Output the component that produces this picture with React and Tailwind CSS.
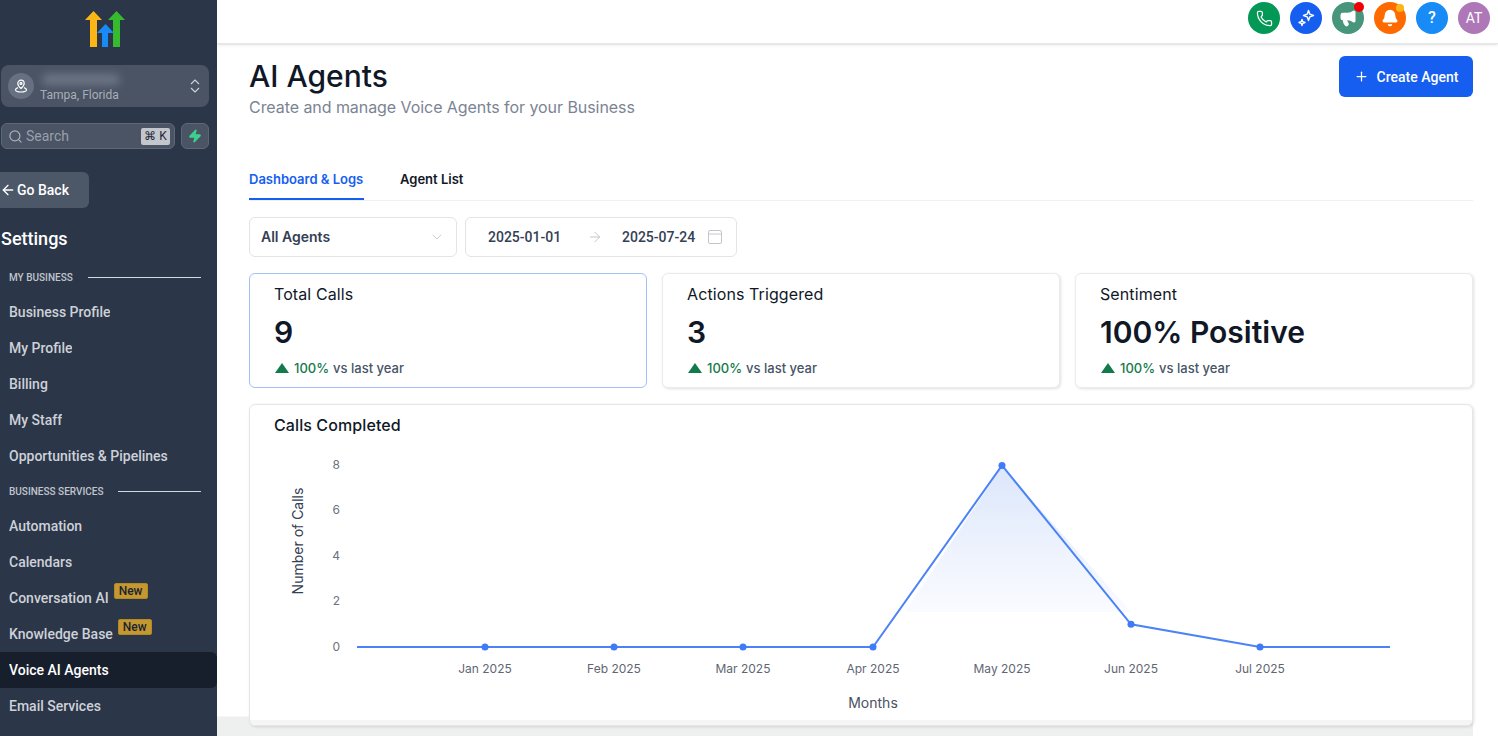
import { ArrowLeft, ArrowRight, ChevronDown, ChevronsUpDown, Megaphone, Phone, Plus, Search, Bell, Zap } from 'lucide-react'

function Logo() {
  return (
    <svg width="40" height="36" viewBox="0 0 40 36">
      <path d="M5 9H0L8.500 0L17 9H12V36H5Z" fill="#fbb516" />
      <path d="M28 9H23L31.500 0L40 9H35V36H28Z" fill="#36bb2e" />
      <path d="M17 22H12L20.500 13L29 22H23V36H17Z" fill="#188bf6" />
    </svg>
  )
}

function PinIcon() {
  return (
    <svg width="14" height="14" viewBox="0 0 14 14" fill="none" stroke="white" strokeWidth="1.200">
      <path d="M7 9.500C5.200 7.800 3.800 6.400 3.800 4.400A3.200 3.200 0 0 1 10.200 4.400C10.200 6.400 8.800 7.800 7 9.500Z" />
      <circle cx="7" cy="4.400" r="1" />
      <path d="M4 8.600C2.600 9.100 1.500 9.800 1.500 10.800C1.500 12.200 4 13 7 13S12.500 12.200 12.500 10.800C12.500 9.800 11.400 9.100 10 8.600" />
    </svg>
  )
}

function StarsIcon() {
  return (
    <svg width="18" height="18" viewBox="0 0 18 18" fill="none" stroke="white" strokeWidth="1.400" strokeLinejoin="round">
      <path d="M11.500 1.500L12.800 5.200L16.500 6.500L12.800 7.800L11.500 11.500L10.200 7.800L6.500 6.500L10.200 5.200Z" />
      <path d="M5 10.500L5.800 12.700L8 13.500L5.800 14.300L5 16.500L4.200 14.300L2 13.500L4.200 12.700Z" />
    </svg>
  )
}

function CalendarIcon() {
  return (
    <svg width="14" height="14" viewBox="0 0 14 14" fill="none" stroke="#c2c6cc" strokeWidth="1">
      <rect x="0.500" y="0.500" width="13" height="13" rx="1.500" />
      <path d="M0.500 4H13.500" />
    </svg>
  )
}

function NavItem({ label, badge, active }) {
  return (
    <div className={`relative flex h-9 items-center pl-[9px] text-sm font-medium ${active ? 'rounded-r-md bg-[#171e2c] text-white' : 'text-[#cdd1d8]'}`}>
      <span className="truncate">{label}</span>
      {badge && (
        <span className="mb-[15px] ml-[5px] rounded-[2px] border border-[#b08a26] bg-[#c4982f] px-1 text-xs leading-[14px] text-[#1b2333]">New</span>
      )}
    </div>
  )
}

function SectionLabel({ label, lineWidth }) {
  return (
    <div className="flex h-[16px] items-center justify-between pl-[9px] pr-4">
      <span className="text-[10px] font-medium text-[#c0c5cd]">{label}</span>
      <span className="h-px bg-[#d5d8dd]" style={{ width: lineWidth }} />
    </div>
  )
}

function Sidebar() {
  return (
    <aside className="flex h-full w-[217px] shrink-0 flex-col overflow-hidden bg-[#2b3648] font-['Roboto',sans-serif]">
      <div className="h-[65px] pl-[85px] pt-[11px]">
        <Logo />
      </div>
      <div className="mx-[1px] flex h-[42px] w-[208px] items-center rounded-lg bg-[#4a5464] pl-[7px] pr-[5px]">
        <div className="flex h-[26px] w-[26px] items-center justify-center rounded-full bg-[#667080]">
          <PinIcon />
        </div>
        <div className="ml-[6px] flex-1">
          <div className="mb-[3px] ml-[2px] mt-[3px] h-[11px] w-[78px] rounded-full bg-[#6d7686] blur-[4px]" />
          <div className="text-xs leading-[14px] text-[#a9afb9]">Tampa, Florida</div>
        </div>
        <ChevronsUpDown size={18} strokeWidth={1.5} className="text-[#cdd1d8]" />
      </div>
      <div className="mt-4 flex gap-[6px] pl-[1px]">
        <div className="flex h-[26px] w-[174px] items-center rounded-md border border-[#5e6775] bg-[#4a5464] pl-[6px] pr-[4px]">
          <Search size={15} className="text-[#a9afb9]" />
          <span className="mb-[1px] ml-[3px] flex-1 text-sm text-[#98a0ac]">Search</span>
          <span className="flex h-[17px] w-[29px] items-center justify-center rounded-[2px] bg-[#c3c7cd] text-xs text-[#1f2937]">⌘ K</span>
        </div>
        <div className="flex h-[26px] w-[28px] items-center justify-center rounded-md border border-[#5e6775] bg-[#4a5464]">
          <Zap size={14} className="fill-[#3ecf8e] text-[#3ecf8e]" />
        </div>
      </div>
      <div className="mt-[23px] flex h-9 w-[89px] items-center gap-[1px] rounded-r-md bg-[#4c5768] text-sm font-medium text-white">
        <ArrowLeft size={16} />
        <span>Go Back</span>
      </div>
      <div className="mt-[17px] pl-[1px] text-lg leading-7 font-medium text-white">Settings</div>
      <div className="mt-[16px]">
        <SectionLabel label="MY BUSINESS" lineWidth={113} />
      </div>
      <div className="mt-[9px]">
        <NavItem label="Business Profile" />
        <NavItem label="My Profile" />
        <NavItem label="Billing" />
        <NavItem label="My Staff" />
        <NavItem label="Opportunities & Pipelines" />
      </div>
      <div className="mt-[9px]">
        <SectionLabel label="BUSINESS SERVICES" lineWidth={83} />
      </div>
      <div className="mt-[9px]">
        <NavItem label="Automation" />
        <NavItem label="Calendars" />
        <NavItem label="Conversation AI" badge />
        <NavItem label="Knowledge Base" badge />
        <NavItem label="Voice AI Agents" active />
        <NavItem label="Email Services" />
      </div>
    </aside>
  )
}

function TopButton({ bg, children, dot }) {
  return (
    <div className={`relative flex h-8 w-8 items-center justify-center rounded-full text-white ${bg}`}>
      {children}
      {dot}
    </div>
  )
}

function TopBar() {
  return (
    <header className="relative flex h-[44px] shrink-0 items-start justify-end gap-[10px] border-b border-[#e5e7eb] pr-[8px] pt-[2px] font-['Roboto',sans-serif] shadow-sm">
      <TopButton bg="bg-[#039855]"><Phone size={17} strokeWidth={1.75} /></TopButton>
      <TopButton bg="bg-[#155eef]"><StarsIcon /></TopButton>
      <TopButton bg="bg-[#47967c]" dot={<span className="absolute top-0 right-0 h-[10px] w-[10px] rounded-full bg-[#f00000]" />}>
        <Megaphone size={18} className="fill-white" />
      </TopButton>
      <TopButton bg="bg-[#ff6a00]" dot={<span className="absolute top-[2px] right-[2px] h-2 w-2 rounded-full bg-[#fbb516]" />}>
        <Bell size={18} className="fill-white" />
      </TopButton>
      <TopButton bg="bg-[#188bf6]"><span className="text-base font-medium">?</span></TopButton>
      <TopButton bg="bg-[#ae78b8]"><span className="text-sm">AT</span></TopButton>
    </header>
  )
}

function StatCard({ title, value, active }) {
  return (
    <div className={`flex h-[115px] flex-1 flex-col rounded-md border bg-white pl-[24px] pt-[10px] ${active ? 'border-[#a3bff6]' : 'border-[#e9ebee] shadow-[1px_1px_3px_rgba(0,0,0,0.12)]'}`}>
      <div className="text-base leading-5 tracking-[0.1px] text-[#101828]">{title}</div>
      <div className="mt-[9px] text-3xl leading-[38px] font-semibold text-[#101828]">{value}</div>
      <div className="mt-[7px] flex items-center text-[13px] leading-5 font-medium text-[#475467]">
        <svg width="14" height="10" viewBox="0 0 14 10" className="ml-[1px] mr-[5px]"><path d="M7 0L14 10H0Z" fill="#137a4b" /></svg>
        <span className="text-[#137a4b]">100%</span>
        <span className="ml-1">vs last year</span>
      </div>
    </div>
  )
}

const months = [
  ['Jan 2025', 485, 0],
  ['Feb 2025', 614, 0],
  ['Mar 2025', 743, 0],
  ['Apr 2025', 873, 0],
  ['May 2025', 1002, 8],
  ['Jun 2025', 1131, 1],
  ['Jul 2025', 1260, 0],
]

// chart coordinates are page px minus the svg's corner
function Chart() {
  const y = (v) => 206 - v * 22.7
  const line = months.map(([, x, v]) => `${x - 250},${y(v)}`).join(' ')
  return (
    <svg width="1222" height="276" viewBox="0 0 1222 276" className="block" fontFamily="Inter, sans-serif">
      <defs>
        <linearGradient id="fill" x1="0" y1="0" x2="0" y2="1">
          <stop offset="0" stopColor="#dce7fb" />
          <stop offset="1" stopColor="#fafbff" />
        </linearGradient>
      </defs>
      <path d="M752 25L655 171H881Z" fill="url(#fill)" />
      <polyline points={`107,206 ${line} 1140,206`} fill="none" stroke="#4b83f7" strokeWidth="2" />
      {months.map(([m, x, v]) => (
        <circle key={m} cx={x - 250} cy={y(v)} r="3.500" fill="#3f7bf6" />
      ))}
      {[0, 2, 4, 6, 8].map((v) => (
        <text key={v} x="90" y={y(v) + 3.500} textAnchor="end" fontSize="12" fill="#6b7280">{v}</text>
      ))}
      {months.map(([m, x]) => (
        <text key={m} x={x - 250} y="232" textAnchor="middle" fontSize="12" fill="#5f6673">{m}</text>
      ))}
      <text x="623" y="267" textAnchor="middle" fontSize="14" fill="#4a5160">Months</text>
      <text transform="translate(53 100) rotate(-90)" textAnchor="middle" fontSize="14" fill="#344054">Number of Calls</text>
    </svg>
  )
}

function Main() {
  return (
    <main className="relative flex min-w-0 flex-1 flex-col overflow-hidden">
      <TopBar />
      <div className="relative z-10 flex-1 pl-[32px] pr-[25px]">
        <div className="flex items-start justify-between pt-[14px]">
          <div>
            <h1 className="text-3xl leading-9 font-medium text-[#101828]">AI Agents</h1>
            <p className="mt-[1px] text-base leading-6 tracking-[-0.06px] text-[#7b8494]">Create and manage Voice Agents for your Business</p>
          </div>
          <button className="mt-[-2px] flex h-[41px] w-[134px] items-center justify-center gap-[8px] rounded-md bg-[#155eef] font-['Roboto',sans-serif] text-sm font-medium text-white">
            <Plus size={15} />
            Create Agent
          </button>
        </div>
        <div className="mt-[40px] flex h-[42px] gap-9 border-b border-[#eef0f2] text-[13px] font-semibold">
          <div className="w-[115px] whitespace-nowrap border-b-2 border-[#155eef] pt-[11px] text-[#155eef]">Dashboard &amp; Logs</div>
          <div className="pt-[11px] text-[#101828]">Agent List</div>
        </div>
        <div className="mt-[16px] flex gap-2">
          <div className="flex h-10 w-[208px] items-center justify-between rounded-md border border-[#e2e4e8] px-[11px] text-sm font-semibold text-[#344054]">
            All Agents
            <ChevronDown size={16} strokeWidth={1.25} className="text-[#c2c6cc]" />
          </div>
          <div className="flex h-10 w-[272px] items-center whitespace-nowrap rounded-md border border-[#e2e4e8] pl-[22px] pr-[14px] font-['Roboto',sans-serif] text-sm font-medium text-[#344054]">
            <span className="w-[75px]">2025-01-01</span>
            <ArrowRight size={16} strokeWidth={1.5} className="ml-[24px] text-[#c2c6cc]" />
            <span className="ml-[19px] flex-1">2025-07-24</span>
            <CalendarIcon />
          </div>
        </div>
        <div className="mt-[16px] flex gap-[15px]">
          <StatCard title="Total Calls" value="9" active />
          <StatCard title="Actions Triggered" value="3" />
          <StatCard title="Sentiment" value="100% Positive" />
        </div>
        <div className="relative mt-[16px] h-[322px] overflow-hidden rounded-md border border-[#e4e6e8] bg-white shadow-[1px_1px_3px_rgba(0,0,0,0.12)]">
          <div className="pl-[24px] pt-[10px] text-base leading-5 font-medium tracking-[0.1px] text-[#101828]">Calls Completed</div>
          <div className="mt-[6px]"><Chart /></div>
          <div className="absolute right-0 bottom-0 left-0 h-[5px] bg-[#f5f5f5]" />
        </div>
      </div>
      <div className="absolute bottom-0 left-0 h-[20px] w-[1256px] border-t border-[#f7f7f7] bg-[#eef0f0]" />
    </main>
  )
}

export default function App() {
  return (
    <div className="flex h-[736px] w-[1498px] overflow-hidden bg-white font-['Inter',sans-serif]">
      <Sidebar />
      <Main />
    </div>
  )
}
